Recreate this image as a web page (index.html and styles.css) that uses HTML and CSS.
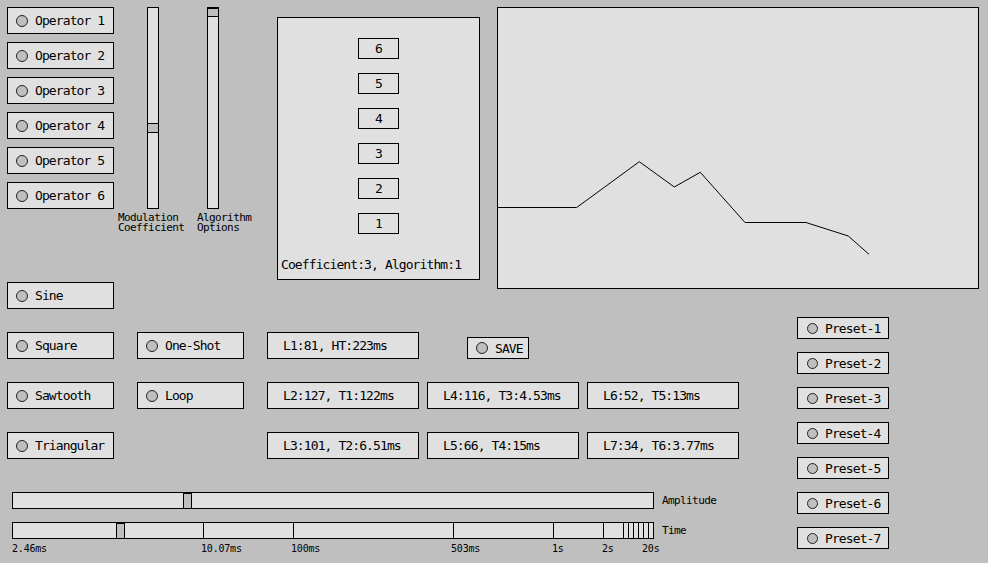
FILE: index.html
```html
<!DOCTYPE html>
<html>
<head>
<meta charset="utf-8">
<title>FM Synth</title>
<link rel="stylesheet" href="styles.css">
</head>
<body>
<div class="app">
  <div class="top">
    <div class="ops">
      <div class="btn op"><span class="dot"></span><span class="txt">Operator 1</span></div>
      <div class="btn op"><span class="dot"></span><span class="txt">Operator 2</span></div>
      <div class="btn op"><span class="dot"></span><span class="txt">Operator 3</span></div>
      <div class="btn op"><span class="dot"></span><span class="txt">Operator 4</span></div>
      <div class="btn op"><span class="dot"></span><span class="txt">Operator 5</span></div>
      <div class="btn op"><span class="dot"></span><span class="txt">Operator 6</span></div>
    </div>
    <div class="vgroup vg1">
      <div class="vslider"><span class="vthumb vthumb-mod"></span></div>
      <div class="small-label">Modulation<br>Coefficient</div>
    </div>
    <div class="vgroup vg2">
      <div class="vslider"><span class="vthumb vthumb-alg"></span></div>
      <div class="small-label">Algorithm<br>Options</div>
    </div>
    <div class="algo">
      <div class="num">6</div>
      <div class="num">5</div>
      <div class="num">4</div>
      <div class="num">3</div>
      <div class="num">2</div>
      <div class="num">1</div>
      <div class="algo-status">Coefficient:3, Algorithm:1</div>
    </div>
    <div class="graph">
      <svg width="480" height="280" viewBox="0 0 480 280">
        <polyline fill="none" stroke="#000" stroke-width="1"
          points="0,199.5 78.7,199.5 141.3,153.7 176.3,179 202.3,164.3 247,214.5 308,214.5 350.3,228 371,246.3"/>
      </svg>
    </div>
  </div>
  <div class="bottom">
    <div class="lower">
      <div class="grid">
        <div class="btn wave r1 c1"><span class="dot"></span><span class="txt">Sine</span></div>
        <div class="btn wave r2 c1"><span class="dot"></span><span class="txt">Square</span></div>
        <div class="btn wave r3 c1"><span class="dot"></span><span class="txt">Sawtooth</span></div>
        <div class="btn wave r4 c1"><span class="dot"></span><span class="txt">Triangular</span></div>
        <div class="btn wave r2 c2"><span class="dot"></span><span class="txt">One-Shot</span></div>
        <div class="btn wave r3 c2"><span class="dot"></span><span class="txt">Loop</span></div>
        <div class="box level r2 c3">L1:81, HT:223ms</div>
        <div class="box level r3 c3">L2:127, T1:122ms</div>
        <div class="box level r4 c3">L3:101, T2:6.51ms</div>
        <div class="btn save r2 c4"><span class="dot"></span><span class="txt">SAVE</span></div>
        <div class="box level r3 c4">L4:116, T3:4.53ms</div>
        <div class="box level r4 c4">L5:66, T4:15ms</div>
        <div class="box level r3 c5">L6:52, T5:13ms</div>
        <div class="box level r4 c5">L7:34, T6:3.77ms</div>
      </div>
      <div class="hrow amp-row">
        <div class="hslider"><span class="hthumb hthumb-amp"></span></div>
        <span class="small-label hlabel">Amplitude</span>
      </div>
      <div class="hrow time-row">
        <div class="time-track">
          <div class="hslider">
            <span class="tick" style="left:190px"></span>
            <span class="tick" style="left:280px"></span>
            <span class="tick" style="left:440px"></span>
            <span class="tick" style="left:540px"></span>
            <span class="tick" style="left:590px"></span>
            <span class="tick" style="left:610px"></span>
            <span class="tick" style="left:615px"></span>
            <span class="tick" style="left:620px"></span>
            <span class="tick" style="left:625px"></span>
            <span class="tick" style="left:630px"></span>
            <span class="tick" style="left:635px"></span>
            <span class="hthumb hthumb-time"></span>
          </div>
          <span class="tlabel" style="left:0px">2.46ms</span>
          <span class="tlabel" style="left:189px">10.07ms</span>
          <span class="tlabel" style="left:279px">100ms</span>
          <span class="tlabel" style="left:439px">503ms</span>
          <span class="tlabel" style="left:540px">1s</span>
          <span class="tlabel" style="left:590px">2s</span>
          <span class="tlabel" style="left:630px">20s</span>
        </div>
        <span class="small-label hlabel">Time</span>
      </div>
    </div>
    <div class="presets">
      <div class="btn preset"><span class="dot"></span><span class="txt">Preset-1</span></div>
      <div class="btn preset"><span class="dot"></span><span class="txt">Preset-2</span></div>
      <div class="btn preset"><span class="dot"></span><span class="txt">Preset-3</span></div>
      <div class="btn preset"><span class="dot"></span><span class="txt">Preset-4</span></div>
      <div class="btn preset"><span class="dot"></span><span class="txt">Preset-5</span></div>
      <div class="btn preset"><span class="dot"></span><span class="txt">Preset-6</span></div>
      <div class="btn preset"><span class="dot"></span><span class="txt">Preset-7</span></div>
    </div>
  </div>
</div>
</body>
</html>
```
FILE: styles.css
```css
* { box-sizing: border-box; }

html, body {
  margin: 0;
  padding: 0;
  background: #bfbfbf;
}

body {
  width: 988px;
  height: 563px;
  overflow: hidden;
  font-family: "DejaVu Sans Mono", "Liberation Mono", monospace;
  font-size: 13px;
  letter-spacing: -0.9px;
  color: #000;
}

.app {
  padding: 7px 0 0 7px;
}

/* ---------- top area ---------- */
.top {
  display: flex;
  align-items: flex-start;
  height: 275px;
}

.ops {
  display: flex;
  flex-direction: column;
  gap: 8px;
  width: 107px;
}

.btn, .box {
  display: flex;
  align-items: center;
  background: #e0e0e0;
  border: 1px solid #000;
  white-space: nowrap;
}

.op, .wave {
  width: 107px;
  height: 27px;
  padding-left: 8px;
}

.dot {
  flex: none;
  width: 12px;
  height: 12px;
  border: 1px solid #222;
  border-radius: 50%;
  background: #bfbfbf;
  margin-right: 7px;
}

.txt {
  line-height: 15px;
}

.vgroup {
  display: flex;
  flex-direction: column;
}
.vg1 { margin-left: 4px; width: 79px; }
.vg2 { width: 80px; }
.vg1 .vslider { margin-left: 29px; }
.vg2 .vslider { margin-left: 10px; }

.vslider {
  position: relative;
  width: 12px;
  height: 202px;
  background: #e0e0e0;
  border: 1px solid #000;
}

.vthumb {
  position: absolute;
  left: -1px;
  right: -1px;
  height: 10px;
  background: #bfbfbf;
  border: 1px solid #000;
}
.vthumb-mod { top: 115px; }
.vthumb-alg { top: 0; height: 9px; }

.small-label {
  font-size: 11px;
  letter-spacing: -0.6px;
  line-height: 10px;
  white-space: nowrap;
}
.vgroup .small-label {
  margin-top: 4px;
}

.algo {
  margin-top: 10px;
  width: 203px;
  height: 263px;
  background: #e0e0e0;
  border: 1px solid #000;
  display: flex;
  flex-direction: column;
  align-items: center;
  gap: 14px;
  padding: 20px 3px 7px 3px;
}

.num {
  width: 41px;
  height: 21px;
  border: 1px solid #000;
  display: flex;
  align-items: center;
  justify-content: center;
  line-height: 15px;
}

.algo-status {
  margin-top: auto;
  align-self: flex-start;
  line-height: 15px;
  white-space: nowrap;
}

.graph {
  margin-left: 17px;
  margin-bottom: -7px;
  width: 482px;
  height: 282px;
  background: #e0e0e0;
  border: 1px solid #000;
}
.graph svg { display: block; }

/* ---------- bottom area ---------- */
.bottom {
  display: flex;
  align-items: flex-start;
}

.lower {
  display: flex;
  flex-direction: column;
}

.grid {
  display: grid;
  grid-template-columns: 130px 130px 160px 160px 152px;
  grid-template-rows: repeat(4, 27px);
  row-gap: 23px;
}

.r1 { grid-row: 1; }
.r2 { grid-row: 2; }
.r3 { grid-row: 3; }
.r4 { grid-row: 4; }
.c1 { grid-column: 1; }
.c2 { grid-column: 2; }
.c3 { grid-column: 3; }
.c4 { grid-column: 4; }
.c5 { grid-column: 5; }

.level {
  width: 152px;
  height: 27px;
  padding-left: 15px;
  line-height: 15px;
}

.save {
  width: 62px;
  height: 22px;
  align-self: end;
  margin-left: 40px;
  padding-left: 8px;
}

.hrow {
  display: flex;
  align-items: flex-start;
  margin-left: 5px;
}
.amp-row { margin-top: 33px; }
.time-row { margin-top: 13px; }

.hslider {
  position: relative;
  width: 642px;
  height: 17px;
  background: #e0e0e0;
  border: 1px solid #000;
}

.hthumb {
  position: absolute;
  top: 0;
  bottom: 0;
  width: 9px;
  background: #bfbfbf;
  border: 1px solid #000;
  border-bottom: none;
}
.hthumb-amp { left: 170px; }
.hthumb-time { left: 103px; }

.tick {
  position: absolute;
  top: 0;
  bottom: 0;
  width: 1px;
  background: #000;
}

.time-track {
  position: relative;
  height: 40px;
}

.tlabel {
  position: absolute;
  top: 22px;
  font-size: 10px;
  letter-spacing: -0.2px;
  line-height: 10px;
  white-space: nowrap;
}

.hlabel {
  margin-left: 8px;
  margin-top: 4px;
}

.presets {
  margin-left: 58px;
  margin-top: 35px;
  display: flex;
  flex-direction: column;
  gap: 13px;
}

.preset {
  width: 92px;
  height: 22px;
  padding-left: 9px;
}
.preset .dot {
  width: 11px;
  height: 11px;
}
```
